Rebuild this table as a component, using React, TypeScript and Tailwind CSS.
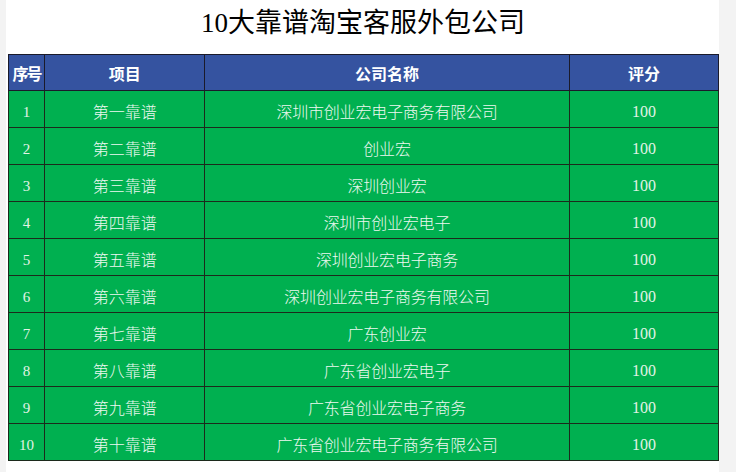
import React from "react";

const rows = [
  ["1", "第一靠谱", "深圳市创业宏电子商务有限公司"],
  ["2", "第二靠谱", "创业宏"],
  ["3", "第三靠谱", "深圳创业宏"],
  ["4", "第四靠谱", "深圳市创业宏电子"],
  ["5", "第五靠谱", "深圳创业宏电子商务"],
  ["6", "第六靠谱", "深圳创业宏电子商务有限公司"],
  ["7", "第七靠谱", "广东创业宏"],
  ["8", "第八靠谱", "广东省创业宏电子"],
  ["9", "第九靠谱", "广东省创业宏电子商务"],
  ["10", "第十靠谱", "广东省创业宏电子商务有限公司"],
];

export default function App() {
  return (
    <div className="w-[736px] h-[472px] bg-[#f3f3f3] flex overflow-hidden">
      <div className="ml-[6px] w-[713px] h-full bg-white flex flex-col">
        <div
          className="h-[54px] flex items-center justify-center text-[27px] text-black pb-[8px] pl-[1px]"
          style={{ fontFamily: '"Liberation Serif", "Noto Sans CJK SC", serif' }}
        >
          10大靠谱淘宝客服外包公司
        </div>
        <table
          className="ml-[2px] border-collapse table-fixed text-white"
          style={{ fontFamily: '"Noto Sans CJK SC", sans-serif' }}
        >
          <colgroup>
            <col className="w-[36px]" />
            <col className="w-[160px]" />
            <col className="w-[364px]" />
            <col className="w-[149px]" />
          </colgroup>
          <thead>
            <tr className="h-[36px] bg-[#3553a0] text-[16px] font-bold">
              <th className="border border-[#1a1a2a] p-0 text-center tracking-[-2px]">序号</th>
              <th className="border border-[#1a1a2a] p-0 text-center">项目</th>
              <th className="border border-[#1a1a2a] p-0 text-center">公司名称</th>
              <th className="border border-[#1a1a2a] p-0 text-center">评分</th>
            </tr>
          </thead>
          <tbody>
            {rows.map((r) => (
              <tr key={r[0]} className="h-[37px] bg-[#00b050] text-[16px] font-light text-[#eef8f0]">
                <td
                  className="border border-[#1c2a1c] p-0 pt-[6px] text-center text-[15px] text-[#e2f3e6]"
                  style={{ fontFamily: '"Liberation Serif", serif' }}
                >
                  {r[0]}
                </td>
                <td className="border border-[#1c2a1c] p-0 pt-[4px] text-center">{r[1]}</td>
                <td className="border border-[#1c2a1c] p-0 pt-[4px] text-center tracking-[-0.2px]">{r[2]}</td>
                <td
                  className="border border-[#1c2a1c] p-0 pt-[6px] text-center text-[16px] text-[#e2f3e6]"
                  style={{ fontFamily: '"Liberation Serif", serif' }}
                >
                  100
                </td>
              </tr>
            ))}
          </tbody>
        </table>
      </div>
    </div>
  );
}
